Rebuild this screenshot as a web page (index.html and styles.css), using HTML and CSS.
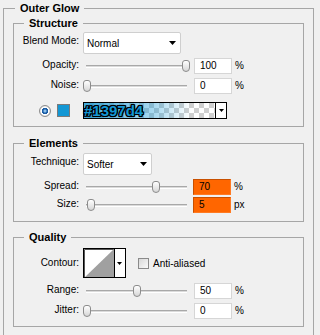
FILE: index.html
```html
<!DOCTYPE html>
<html lang="en">
<head>
    <meta charset="UTF-8">
    <meta name="viewport" content="width=device-width, initial-scale=1.0">
    <title>Outer Glow</title>
    <link rel="stylesheet" href="styles.css">
</head>
<body>
    <!-- Layer style panel -->
    <main class="panel">
        <fieldset class="group outer">
            <legend>Outer Glow</legend>

            <!-- Structure -->
            <fieldset class="group structure">
                <legend>Structure</legend>
                <div class="row row_select">
                    <label class="lbl">Blend Mode:</label>
                    <div class="select sel_blend">
                        <span>Normal</span>
                        <svg class="arrow" width="7" height="4" viewBox="0 0 7 4"><polygon points="0,0 7,0 3.5,4"/></svg>
                    </div>
                </div>
                <div class="row row_input">
                    <label class="lbl">Opacity:</label>
                    <div class="slider"><div class="track"></div><div class="thumb" style="left: 99px"></div></div>
                    <div class="field">100</div>
                    <span class="unit">%</span>
                </div>
                <div class="row row_input gap_s">
                    <label class="lbl">Noise:</label>
                    <div class="slider"><div class="track"></div><div class="thumb" style="left: 0px"></div></div>
                    <div class="field">0</div>
                    <span class="unit">%</span>
                </div>
                <div class="row row_color">
                    <span class="radio"></span>
                    <span class="swatch"></span>
                    <div class="gradient">
                        <div class="grad_fill"><span class="hex">#1397d4</span></div>
                        <div class="grad_btn">
                            <svg width="5" height="3" viewBox="0 0 5 3"><polygon points="0,0 5,0 2.5,3"/></svg>
                        </div>
                    </div>
                </div>
            </fieldset>

            <!-- Elements -->
            <fieldset class="group elements">
                <legend>Elements</legend>
                <div class="row row_select">
                    <label class="lbl">Technique:</label>
                    <div class="select sel_tech">
                        <span>Softer</span>
                        <svg class="arrow" width="7" height="4" viewBox="0 0 7 4"><polygon points="0,0 7,0 3.5,4"/></svg>
                    </div>
                </div>
                <div class="row row_input">
                    <label class="lbl">Spread:</label>
                    <div class="slider"><div class="track"></div><div class="thumb" style="left: 69px"></div></div>
                    <div class="field hot">70</div>
                    <span class="unit">%</span>
                </div>
                <div class="row row_input gap_xs">
                    <label class="lbl">Size:</label>
                    <div class="slider"><div class="track"></div><div class="thumb" style="left: 4px"></div></div>
                    <div class="field hot">5</div>
                    <span class="unit">px</span>
                </div>
            </fieldset>

            <!-- Quality -->
            <fieldset class="group quality">
                <legend>Quality</legend>
                <div class="row row_contour">
                    <label class="lbl">Contour:</label>
                    <svg class="contour" width="43" height="30" viewBox="0 0 43 30">
                        <rect x="0.5" y="0.5" width="42" height="29" fill="#fff" stroke="#000"/>
                        <polyline points="1.5,29 1.5,1.5 31,1.5" fill="none" stroke="#555"/>
                        <polygon points="2,29 31,1 31,29" fill="#a0a0a0"/>
                        <line x1="31.5" y1="0" x2="31.5" y2="30" stroke="#000"/>
                        <polygon points="34,14 39,14 36.5,17" fill="#000"/>
                    </svg>
                    <span class="check"></span>
                    <span class="check_lbl">Anti-aliased</span>
                </div>
                <div class="row row_input gap_m">
                    <label class="lbl">Range:</label>
                    <div class="slider"><div class="track"></div><div class="thumb" style="left: 50px"></div></div>
                    <div class="field">50</div>
                    <span class="unit">%</span>
                </div>
                <div class="row row_input">
                    <label class="lbl">Jitter:</label>
                    <div class="slider"><div class="track"></div><div class="thumb" style="left: 0px"></div></div>
                    <div class="field">0</div>
                    <span class="unit">%</span>
                </div>
            </fieldset>
        </fieldset>
    </main>
</body>
</html>
```

FILE: styles.css
```css
/* Page: light grey dialog background */
body {
    margin: 0;
    width: 320px;
    height: 335px;
    overflow: hidden;
    background-color: #f0f0f0;
    font-family: "Liberation Sans", Arial, sans-serif;
    font-size: 10px;
    color: #000;
}
/* Group boxes */
.group {
    margin: 0 9px;
    padding: 0;
    min-inline-size: 0;
    border: 1px solid #a6a6a6;
}
.group > legend {
    margin-left: 10px;
    padding: 0 5px;
    font-size: 11px;
    font-weight: bold;
    line-height: 13px;
}
.outer {
    width: 311px;
    height: 360px;
    box-sizing: border-box;
    margin: 2px 0 0 3px;
}
.outer > legend {
    margin-left: 11px;
}
.structure {
    margin-top: 2px;
    padding: 2px 0 7px;
}
.elements {
    margin-top: 10px;
    padding: 3px 0 8px;
}
.quality {
    margin-top: 9px;
    padding: 4px 0 7px;
}
/* Rows */
.row {
    display: flex;
    align-items: center;
}
.row_select {
    height: 22px;
    align-items: flex-start;
}
.row_input {
    height: 16px;
    margin-top: 4px;
}
.gap_s {
    margin-top: 4px;
}
.gap_xs {
    margin-top: 2px;
}
.gap_m {
    margin-top: 5px;
}
.row_color {
    height: 17px;
    margin-top: 8px;
    padding-left: 25px;
}
.row_contour {
    height: 30px;
}
/* Labels */
.lbl {
    flex: none;
    width: 65px;
    margin-right: 4px;
    text-align: right;
    line-height: 12px;
    white-space: nowrap;
}
.row_select .lbl {
    padding-top: 3px;
}
.row_input .lbl {
    padding-bottom: 2px;
}
/* Drop-down boxes */
.select {
    display: flex;
    align-items: center;
    justify-content: space-between;
    height: 22px;
    box-sizing: border-box;
    padding: 0 4px 0 3px;
    background-color: #fff;
    border: 1px solid #cfcfcf;
    border-radius: 2px;
}
.sel_blend {
    width: 98px;
}
.sel_tech {
    width: 69px;
}
.select span {
    padding-top: 1px;
}
.arrow {
    display: block;
}
/* Sliders */
.slider {
    position: relative;
    flex: none;
    display: flex;
    align-items: center;
    width: 107px;
    height: 16px;
}
.track {
    flex: 1;
    height: 1px;
    margin: 0 3px;
    background-color: #dadada;
    border-top: 1px solid #a8a8a8;
    border-bottom: 1px solid #fff;
}
.thumb {
    position: absolute;
    top: 2px;
    width: 8px;
    height: 12px;
    box-sizing: border-box;
    border: 1px solid #8c8c8c;
    border-radius: 3px 3px 4px 4px;
    background: linear-gradient(#fff, #d6d6d6);
}
/* Number fields */
.field {
    flex: none;
    width: 38px;
    height: 16px;
    box-sizing: border-box;
    margin-left: 4px;
    padding-left: 5px;
    line-height: 14px;
    background-color: #fff;
    border: 1px solid #d6d6d6;
}
.field.hot {
    margin-left: 3px;
    background-color: #ff6600;
    border-color: #c85000 #ff7a22 #ff7a22 #c85000;
}
.unit {
    margin-left: 3px;
    padding-bottom: 2px;
}
/* Colour row */
.radio {
    flex: none;
    width: 12px;
    height: 12px;
    box-sizing: border-box;
    border: 1px solid #8d8d8d;
    border-radius: 50%;
    background: radial-gradient(circle, #8cc0ea 0 1px, #1c5ea6 2px 3px, #fff 3.5px 4px, #dcdcdc 5px);
}
.swatch {
    flex: none;
    width: 13px;
    height: 13px;
    box-sizing: border-box;
    margin: 0 13px 0 6px;
    background-color: #1397d4;
    border: 1px solid #7a7a7a;
}
.gradient {
    display: flex;
    flex: none;
    width: 144px;
    height: 17px;
    box-sizing: border-box;
    border: 1px solid #000;
    background-color: #fff;
}
.grad_fill {
    flex: 1;
    display: flex;
    align-items: center;
    background:
        linear-gradient(to right, rgba(19, 151, 212, 0.8), rgba(19, 151, 212, 0.35) 55%, rgba(19, 151, 212, 0) 82%),
        repeating-conic-gradient(#cfcfcf 0 25%, #fff 0 50%) 0 0 / 10px 10px;
}
.hex {
    margin-left: 0;
    font-size: 15px;
    font-weight: bold;
    line-height: 15px;
    color: #1397d4;
    text-shadow:
        -1px 0 #000, 1px 0 #000, 0 -1px #000, 0 1px #000,
        -1px -1px #000, 1px 1px #000, -1px 1px #000, 1px -1px #000,
        0 0 2px #000;
}
.grad_btn {
    flex: none;
    display: flex;
    align-items: center;
    justify-content: center;
    width: 10px;
    background-color: #fff;
    border-left: 1px solid #000;
}
.grad_btn svg {
    display: block;
}
/* Contour row */
.contour {
    display: block;
    flex: none;
}
.check {
    flex: none;
    width: 11px;
    height: 11px;
    box-sizing: border-box;
    margin-left: 12px;
    border: 1px solid #8a8a8a;
    background: linear-gradient(135deg, #d8d8d8, #fafafa);
}
.check_lbl {
    margin-left: 4px;
}
```
